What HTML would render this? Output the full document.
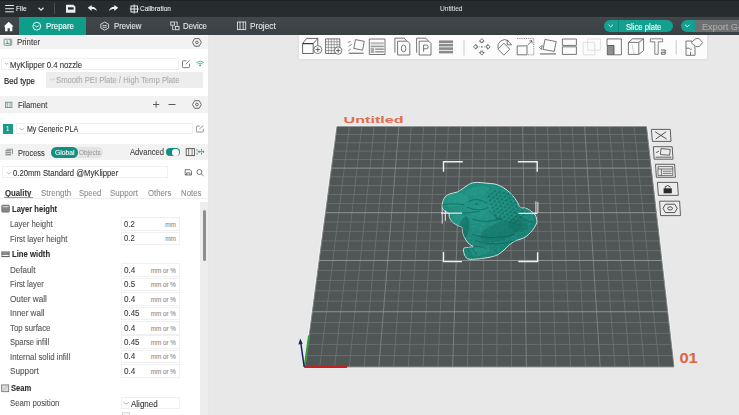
<!DOCTYPE html>
<html><head><meta charset="utf-8">
<style>
*{margin:0;padding:0;box-sizing:border-box}
html,body{width:739px;height:415px;overflow:hidden;background:#e8e8e8;font-family:"Liberation Sans",sans-serif;}
.a{position:absolute;white-space:nowrap}
#title{position:absolute;left:0;top:0;width:739px;height:16.5px;background:#272c2e;border-top:1px solid #1e2224}
#tabs{position:absolute;left:0;top:16.5px;width:739px;height:18px;background:linear-gradient(#41474a,#3a4043)}
.tw{color:#fff;font-size:7.6px;line-height:1}
.tt{color:#eef0f0;font-size:8.6px;line-height:1}
#panel{position:absolute;left:0;top:34.5px;width:208px;height:381px;background:#fff}
.hdr{position:absolute;left:0;width:208px;background:#f2f2f2}
.ht{font-size:8.4px;color:#333;line-height:1}
.lt{font-size:8px;color:#555;line-height:1}
.bt{font-size:8px;color:#222;font-weight:bold;line-height:1}
.inp{position:absolute;border:1px solid #f0f0f0;background:#fff}
.val{font-size:8px;color:#333;line-height:1}
.unit{font-size:6.4px;color:#777;line-height:1}
svg{position:absolute;overflow:visible}
</style></head><body>
<div id="title"></div>
<div id="tabs"></div>

<!-- title bar contents -->
<svg style="left:0;top:0" width="739" height="17">
  <g stroke="#e8eaea" stroke-width="1.2" fill="none">
    <path d="M5.2 5.5H13.9M5.2 8.7H13.9M5.2 11.8H13.9" stroke-width="1"/>
    <path d="M38.5 7.8L41 10.2L43.5 7.8"/>
  </g>
  <path d="M54.5 3V14" stroke="#4a4f52" stroke-width="1"/>
  <!-- save -->
  <path d="M66 4.8H73.4L75.4 6.8V12.8H66Z" fill="#eceeee"/>
  <rect x="68" y="7.3" width="5.6" height="2.3" fill="#24292b"/>
  <!-- undo -->
  <path d="M87.7 7.8L91.6 4.9V6.8C94.6 6.8 96.7 8.4 96.7 11.2C95.5 9.6 94 9.1 91.6 9.1V10.9Z" fill="#eceeee"/>
  <!-- redo -->
  <path d="M118.2 7.8L114.3 4.9V6.8C111.3 6.8 109.2 8.4 109.2 11.2C110.4 9.6 111.9 9.1 114.3 9.1V10.9Z" fill="#eceeee"/>
  <!-- calibration -->
  <g stroke="#e8eaea" stroke-width="1" fill="none">
    <rect x="131" y="6" width="6.5" height="6" />
    <path d="M134.2 4.5V13.5M129.8 9H138.8"/>
  </g>
</svg>

<!-- tab bar contents -->
<div class="a" style="left:19px;top:16.5px;width:67.4px;height:18px;background:#0f9d8a"></div>
<svg style="left:0;top:0" width="739" height="35">
  <!-- home -->
  <path d="M3.8 26.5L8.7 21.8L13.6 26.5H12.3V31.2H9.8V28.2H7.6V31.2H5.1V26.5Z" fill="#fff"/>
  <!-- prepare icon -->
  <g stroke="#fff" stroke-width="0.9" fill="none">
    <circle cx="36.8" cy="26.2" r="3.9"/>
    <path d="M34.4 25.4L36.8 27L39.2 25.4"/>
  </g>
  <!-- preview icon -->
  <g stroke="#e0e2e2" stroke-width="0.9" fill="none">
    <path d="M104.7 22.1L108.6 24.2V28L104.7 30.1L100.8 28V24.2Z"/>
    <path d="M102.6 25.2Q104.7 26.2 106.8 25.2M102.6 27Q104.7 28 106.8 27"/>
  </g>
  <!-- device -->
  <g stroke="#e0e2e2" stroke-width="0.9" fill="none">
    <rect x="170.8" y="22" width="3.6" height="3.2"/>
    <rect x="175.4" y="26.5" width="3.6" height="3.2"/>
    <path d="M172.6 26V29.7H174.5M177.2 25.7V22H175.5"/>
  </g>
  <!-- project -->
  <g stroke="#e0e2e2" stroke-width="0.9" fill="none">
    <rect x="237.5" y="22" width="8.2" height="7.6"/>
    <path d="M240 22V29.6M243.2 22V29.6"/>
  </g>
</svg>

<!-- slice plate button -->
<div class="a" style="left:604px;top:20px;width:69px;height:12px;border-radius:6px;background:#13a08e"></div>
<div class="a" style="left:617.5px;top:20px;width:0.8px;height:12px;background:#0e8a7a"></div>
<svg style="left:0;top:0" width="739" height="35">
  <path d="M608.5 24.8L610.7 26.8L612.9 24.8" stroke="#fff" stroke-width="0.9" fill="none"/>
</svg>
<div class="a" style="left:680.5px;top:20px;width:20px;height:12px;border-radius:6px;background:#13a08e"></div>
<div class="a" style="left:694.5px;top:20px;width:50px;height:12px;background:#6d6f70"></div>
<svg style="left:0;top:0" width="739" height="35">
  <path d="M685 24.8L687.2 26.8L689.4 24.8" stroke="#fff" stroke-width="0.9" fill="none"/>
</svg>

<div class="a" style="left:15.67px;top:5.40px;font-size:7.56px;line-height:1;color:#f2f2f2;transform:scaleX(0.8695);transform-origin:0 0;-webkit-text-stroke:0.1px #f2f2f2;">File</div>
<div class="a" style="left:140.28px;top:5.40px;font-size:7.56px;line-height:1;color:#e8eaea;transform:scaleX(0.8545);transform-origin:0 0;-webkit-text-stroke:0.1px #e8eaea;">Calibration</div>
<div class="a" style="left:439.57px;top:5.48px;font-size:7.34px;line-height:1;color:#d6d8d8;transform:scaleX(0.9076);transform-origin:0 0;-webkit-text-stroke:0.1px #d6d8d8;">Untitled</div>
<div class="a" style="left:46.21px;top:22.37px;font-size:8.42px;line-height:1;color:#ffffff;transform:scaleX(0.9311);transform-origin:0 0;-webkit-text-stroke:0.1px #ffffff;">Prepare</div>
<div class="a" style="left:113.61px;top:22.37px;font-size:8.42px;line-height:1;color:#e6e8e8;transform:scaleX(0.9177);transform-origin:0 0;-webkit-text-stroke:0.1px #e6e8e8;">Preview</div>
<div class="a" style="left:183.31px;top:22.37px;font-size:8.42px;line-height:1;color:#e6e8e8;transform:scaleX(0.9323);transform-origin:0 0;-webkit-text-stroke:0.1px #e6e8e8;">Device</div>
<div class="a" style="left:250.09px;top:22.37px;font-size:8.42px;line-height:1;color:#e6e8e8;transform:scaleX(0.9819);transform-origin:0 0;-webkit-text-stroke:0.1px #e6e8e8;">Project</div>
<div class="a" style="left:625.92px;top:22.77px;font-size:8.42px;line-height:1;color:#ffffff;transform:scaleX(0.9106);transform-origin:0 0;-webkit-text-stroke:0.1px #ffffff;">Slice plate</div>
<div class="a" style="left:701.54px;top:22.77px;font-size:8.42px;line-height:1;color:#a9abab;transform:scaleX(1.0830);transform-origin:0 0;-webkit-text-stroke:0.1px #a9abab;">Export G-code</div>
<!-- left panel -->
<div id="panel"></div>
<div class="hdr" style="top:35.6px;height:13.7px"></div>
<div class="hdr" style="top:96px;height:17px"></div>
<div class="hdr" style="top:143.6px;height:16px"></div>
<div class="a" style="left:16.86px;top:38.45px;font-size:8.86px;line-height:1;color:#3a3a3a;transform:scaleX(0.8898);transform-origin:0 0;-webkit-text-stroke:0.1px #3a3a3a;">Printer</div>
<div class="a" style="left:17.52px;top:101.15px;font-size:8.86px;line-height:1;color:#3a3a3a;transform:scaleX(0.8625);transform-origin:0 0;-webkit-text-stroke:0.1px #3a3a3a;">Filament</div>
<div class="a" style="left:18.43px;top:148.60px;font-size:8.86px;line-height:1;color:#3a3a3a;transform:scaleX(0.8335);transform-origin:0 0;-webkit-text-stroke:0.1px #3a3a3a;">Process</div>
<div class="inp" style="left:0.5px;top:58.3px;width:178px;height:11.4px"></div>
<div class="a" style="left:10.41px;top:60.68px;font-size:8.53px;line-height:1;color:#333;transform:scaleX(0.9129);transform-origin:0 0;-webkit-text-stroke:0.1px #333;">MyKlipper 0.4 nozzle</div>
<div class="a" style="left:4.31px;top:76.78px;font-size:8.64px;line-height:1;color:#1e1e1e;transform:scaleX(0.9092);transform-origin:0 0;-webkit-text-stroke:0.1px #1e1e1e;-webkit-text-stroke:0.15px #1e1e1e;">Bed type</div>
<div class="a" style="left:46.1px;top:72px;width:157px;height:15.5px;background:#ededed"></div>
<div class="a" style="left:56.01px;top:76.38px;font-size:8.53px;line-height:1;color:#ababab;transform:scaleX(0.9036);transform-origin:0 0;-webkit-text-stroke:0.1px #ababab;">Smooth PEI Plate / High Temp Plate</div>
<div class="a" style="left:3px;top:123.9px;width:10.2px;height:10px;background:#1a9a8b"></div>
<div class="a" style="left:6.30px;top:126.36px;font-size:7.13px;line-height:1;color:#e8f6f4;transform:scaleX(0.8427);transform-origin:0 0;-webkit-text-stroke:0.1px #e8f6f4;">1</div>
<div class="inp" style="left:15.9px;top:122.6px;width:176.8px;height:11.8px"></div>
<div class="a" style="left:26.65px;top:125.18px;font-size:8.53px;line-height:1;color:#333;transform:scaleX(0.8248);transform-origin:0 0;-webkit-text-stroke:0.1px #333;">My Generic PLA</div>
<div class="a" style="left:51.4px;top:147.4px;width:51.8px;height:10.7px;border-radius:5.3px;background:#e4e4e4"></div>
<div class="a" style="left:51.4px;top:147.4px;width:26.8px;height:10.7px;border-radius:5.3px;background:#0f9181"></div>
<div class="a" style="left:55.16px;top:149.38px;font-size:7.34px;line-height:1;color:#ffffff;transform:scaleX(0.9238);transform-origin:0 0;-webkit-text-stroke:0.1px #ffffff;">Global</div>
<div class="a" style="left:78.88px;top:149.38px;font-size:7.34px;line-height:1;color:#9c9c9c;transform:scaleX(0.8706);transform-origin:0 0;-webkit-text-stroke:0.1px #9c9c9c;">Objects</div>
<div class="a" style="left:130.02px;top:148.48px;font-size:8.64px;line-height:1;color:#444;transform:scaleX(0.8871);transform-origin:0 0;-webkit-text-stroke:0.1px #444;">Advanced</div>
<div class="a" style="left:165.7px;top:148.3px;width:14px;height:8.2px;border-radius:4.1px;background:#0f9181"></div>
<div class="a" style="left:172.3px;top:149.1px;width:6.6px;height:6.6px;border-radius:50%;background:#fff"></div>
<div class="inp" style="left:1.8px;top:166.2px;width:166.3px;height:12.2px"></div>
<div class="a" style="left:12.92px;top:169.08px;font-size:8.53px;line-height:1;color:#333;transform:scaleX(0.9025);transform-origin:0 0;-webkit-text-stroke:0.1px #333;">0.20mm Standard @MyKlipper</div>
<div class="a" style="left:5.41px;top:188.58px;font-size:8.64px;line-height:1;color:#333;transform:scaleX(0.9015);transform-origin:0 0;font-weight:bold;-webkit-text-stroke:0.1px #333;">Quality</div>
<div class="a" style="left:40.50px;top:188.58px;font-size:8.64px;line-height:1;color:#8e8e8e;transform:scaleX(0.9252);transform-origin:0 0;-webkit-text-stroke:0.1px #8e8e8e;">Strength</div>
<div class="a" style="left:79.12px;top:188.58px;font-size:8.64px;line-height:1;color:#8e8e8e;transform:scaleX(0.8882);transform-origin:0 0;-webkit-text-stroke:0.1px #8e8e8e;">Speed</div>
<div class="a" style="left:110.40px;top:188.58px;font-size:8.64px;line-height:1;color:#8e8e8e;transform:scaleX(0.9226);transform-origin:0 0;-webkit-text-stroke:0.1px #8e8e8e;">Support</div>
<div class="a" style="left:148.41px;top:188.58px;font-size:8.64px;line-height:1;color:#8e8e8e;transform:scaleX(0.8986);transform-origin:0 0;-webkit-text-stroke:0.1px #8e8e8e;">Others</div>
<div class="a" style="left:180.91px;top:188.58px;font-size:8.64px;line-height:1;color:#8e8e8e;transform:scaleX(0.9040);transform-origin:0 0;-webkit-text-stroke:0.1px #8e8e8e;">Notes</div>
<div class="a" style="left:0;top:198.3px;width:208px;height:1px;background:#efefef"></div>
<div class="a" style="left:4.3px;top:197.3px;width:28.4px;height:1.2px;background:#d97b72"></div>
<div class="a" style="left:211.5px;top:34.5px;width:1.5px;height:381px;background:#ebebeb"></div>
<div class="a" style="left:200px;top:201.8px;width:7.6px;height:214px;background:#ededed"></div>
<div class="a" style="left:202.5px;top:210px;width:3.9px;height:50.7px;border-radius:2px;background:#8e8e8e"></div>
<div class="a" style="left:11.52px;top:204.58px;font-size:8.53px;line-height:1;color:#2e2e2e;transform:scaleX(0.8907);transform-origin:0 0;font-weight:bold;-webkit-text-stroke:0.1px #2e2e2e;">Layer height</div>
<div class="a" style="left:10.41px;top:220.18px;font-size:8.53px;line-height:1;color:#555555;transform:scaleX(0.9093);transform-origin:0 0;-webkit-text-stroke:0.1px #555555;">Layer height</div>
<div class="inp" style="left:120.9px;top:217.3px;width:59.1px;height:13.6px"></div>
<div class="a" style="left:123.82px;top:219.88px;font-size:8.53px;line-height:1;color:#3c3c3c;transform:scaleX(0.9015);transform-origin:0 0;-webkit-text-stroke:0.1px #3c3c3c;">0.2</div>
<div class="a" style="left:165.18px;top:221.71px;font-size:6.48px;line-height:1;color:#8f8f8f;-webkit-text-stroke:0.1px #8f8f8f;">mm</div>
<div class="a" style="left:10.21px;top:234.58px;font-size:8.53px;line-height:1;color:#555555;transform:scaleX(0.9118);transform-origin:0 0;-webkit-text-stroke:0.1px #555555;">First layer height</div>
<div class="inp" style="left:120.9px;top:231.7px;width:59.1px;height:13.6px"></div>
<div class="a" style="left:123.82px;top:234.28px;font-size:8.53px;line-height:1;color:#3c3c3c;transform:scaleX(0.9015);transform-origin:0 0;-webkit-text-stroke:0.1px #3c3c3c;">0.2</div>
<div class="a" style="left:165.18px;top:236.11px;font-size:6.48px;line-height:1;color:#8f8f8f;-webkit-text-stroke:0.1px #8f8f8f;">mm</div>
<div class="a" style="left:12.41px;top:250.48px;font-size:8.53px;line-height:1;color:#2e2e2e;transform:scaleX(0.9055);transform-origin:0 0;font-weight:bold;-webkit-text-stroke:0.1px #2e2e2e;">Line width</div>
<div class="a" style="left:10.40px;top:265.98px;font-size:8.53px;line-height:1;color:#555555;transform:scaleX(0.9404);transform-origin:0 0;-webkit-text-stroke:0.1px #555555;">Default</div>
<div class="inp" style="left:120.9px;top:263.1px;width:59.1px;height:13.6px"></div>
<div class="a" style="left:123.79px;top:265.68px;font-size:8.53px;line-height:1;color:#3c3c3c;transform:scaleX(0.9556);transform-origin:0 0;-webkit-text-stroke:0.1px #3c3c3c;">0.4</div>
<div class="a" style="left:150.71px;top:267.65px;font-size:6.32px;line-height:1;color:#8f8f8f;-webkit-text-stroke:0.1px #8f8f8f;">mm or %</div>
<div class="a" style="left:10.41px;top:280.48px;font-size:8.53px;line-height:1;color:#555555;transform:scaleX(0.9051);transform-origin:0 0;-webkit-text-stroke:0.1px #555555;">First layer</div>
<div class="inp" style="left:120.9px;top:277.6px;width:59.1px;height:13.6px"></div>
<div class="a" style="left:123.80px;top:280.18px;font-size:8.53px;line-height:1;color:#3c3c3c;transform:scaleX(0.9375);transform-origin:0 0;-webkit-text-stroke:0.1px #3c3c3c;">0.5</div>
<div class="a" style="left:150.71px;top:282.15px;font-size:6.32px;line-height:1;color:#8f8f8f;-webkit-text-stroke:0.1px #8f8f8f;">mm or %</div>
<div class="a" style="left:10.09px;top:294.88px;font-size:8.53px;line-height:1;color:#555555;transform:scaleX(0.9618);transform-origin:0 0;-webkit-text-stroke:0.1px #555555;">Outer wall</div>
<div class="inp" style="left:120.9px;top:292.0px;width:59.1px;height:13.6px"></div>
<div class="a" style="left:123.79px;top:294.58px;font-size:8.53px;line-height:1;color:#3c3c3c;transform:scaleX(0.9556);transform-origin:0 0;-webkit-text-stroke:0.1px #3c3c3c;">0.4</div>
<div class="a" style="left:150.71px;top:296.55px;font-size:6.32px;line-height:1;color:#8f8f8f;-webkit-text-stroke:0.1px #8f8f8f;">mm or %</div>
<div class="a" style="left:10.10px;top:309.38px;font-size:8.53px;line-height:1;color:#555555;transform:scaleX(0.9455);transform-origin:0 0;-webkit-text-stroke:0.1px #555555;">Inner wall</div>
<div class="inp" style="left:120.9px;top:306.5px;width:59.1px;height:13.6px"></div>
<div class="a" style="left:123.80px;top:309.08px;font-size:8.53px;line-height:1;color:#3c3c3c;transform:scaleX(0.9345);transform-origin:0 0;-webkit-text-stroke:0.1px #3c3c3c;">0.45</div>
<div class="a" style="left:150.71px;top:311.05px;font-size:6.32px;line-height:1;color:#8f8f8f;-webkit-text-stroke:0.1px #8f8f8f;">mm or %</div>
<div class="a" style="left:10.11px;top:323.88px;font-size:8.53px;line-height:1;color:#555555;transform:scaleX(0.9191);transform-origin:0 0;-webkit-text-stroke:0.1px #555555;">Top surface</div>
<div class="inp" style="left:120.9px;top:321.0px;width:59.1px;height:13.6px"></div>
<div class="a" style="left:123.79px;top:323.58px;font-size:8.53px;line-height:1;color:#3c3c3c;transform:scaleX(0.9556);transform-origin:0 0;-webkit-text-stroke:0.1px #3c3c3c;">0.4</div>
<div class="a" style="left:150.71px;top:325.55px;font-size:6.32px;line-height:1;color:#8f8f8f;-webkit-text-stroke:0.1px #8f8f8f;">mm or %</div>
<div class="a" style="left:10.12px;top:338.28px;font-size:8.53px;line-height:1;color:#555555;transform:scaleX(0.8908);transform-origin:0 0;-webkit-text-stroke:0.1px #555555;">Sparse infill</div>
<div class="inp" style="left:120.9px;top:335.4px;width:59.1px;height:13.6px"></div>
<div class="a" style="left:123.80px;top:337.98px;font-size:8.53px;line-height:1;color:#3c3c3c;transform:scaleX(0.9345);transform-origin:0 0;-webkit-text-stroke:0.1px #3c3c3c;">0.45</div>
<div class="a" style="left:150.71px;top:339.95px;font-size:6.32px;line-height:1;color:#8f8f8f;-webkit-text-stroke:0.1px #8f8f8f;">mm or %</div>
<div class="a" style="left:10.11px;top:352.78px;font-size:8.53px;line-height:1;color:#555555;transform:scaleX(0.9231);transform-origin:0 0;-webkit-text-stroke:0.1px #555555;">Internal solid infill</div>
<div class="inp" style="left:120.9px;top:349.9px;width:59.1px;height:13.6px"></div>
<div class="a" style="left:123.79px;top:352.48px;font-size:8.53px;line-height:1;color:#3c3c3c;transform:scaleX(0.9556);transform-origin:0 0;-webkit-text-stroke:0.1px #3c3c3c;">0.4</div>
<div class="a" style="left:150.71px;top:354.45px;font-size:6.32px;line-height:1;color:#8f8f8f;-webkit-text-stroke:0.1px #8f8f8f;">mm or %</div>
<div class="a" style="left:10.09px;top:367.28px;font-size:8.53px;line-height:1;color:#555555;transform:scaleX(0.9651);transform-origin:0 0;-webkit-text-stroke:0.1px #555555;">Support</div>
<div class="inp" style="left:120.9px;top:364.4px;width:59.1px;height:13.6px"></div>
<div class="a" style="left:123.79px;top:366.98px;font-size:8.53px;line-height:1;color:#3c3c3c;transform:scaleX(0.9556);transform-origin:0 0;-webkit-text-stroke:0.1px #3c3c3c;">0.4</div>
<div class="a" style="left:150.71px;top:368.95px;font-size:6.32px;line-height:1;color:#8f8f8f;-webkit-text-stroke:0.1px #8f8f8f;">mm or %</div>
<div class="a" style="left:11.02px;top:383.88px;font-size:8.53px;line-height:1;color:#2e2e2e;transform:scaleX(0.8909);transform-origin:0 0;font-weight:bold;-webkit-text-stroke:0.1px #2e2e2e;">Seam</div>
<div class="a" style="left:10.11px;top:399.28px;font-size:8.53px;line-height:1;color:#555555;transform:scaleX(0.9156);transform-origin:0 0;-webkit-text-stroke:0.1px #555555;">Seam position</div>
<div class="inp" style="left:120.9px;top:397.4px;width:59.1px;height:11.8px"></div>
<div class="a" style="left:130.60px;top:399.98px;font-size:8.53px;line-height:1;color:#333;transform:scaleX(0.9388);transform-origin:0 0;-webkit-text-stroke:0.1px #333;">Aligned</div>
<div class="a" style="left:121.6px;top:412px;width:8px;height:4px;border:1px solid #ddd;background:#f4f4f4"></div>
<svg style="left:0;top:0" width="739" height="415">
<!-- printer icon -->
<rect x="4.1" y="39.2" width="7.6" height="6.1" rx="0.6" fill="#e4f4f1" stroke="#74827f" stroke-width="0.8"/>
<path d="M10.3 39.4V45.2M5.6 43.5H9.3M7.2 40.4V43.5" stroke="#66746f" stroke-width="0.75" fill="none"/>
<!-- gear icons -->
<g stroke="#5a5a5a" stroke-width="0.9" fill="none">
<path d="M194.6 38.6H199.2L201.3 42.4L199.2 46.2H194.6L192.5 42.4Z"/><circle cx="196.9" cy="42.4" r="1.3"/>
<path d="M194.6 100.7H199.2L201.3 104.5L199.2 108.3H194.6L192.5 104.5Z"/><circle cx="196.9" cy="104.5" r="1.3"/>
<path d="M153 104.5H159.2M156.1 101.4V107.6M168.5 104.5H175.5" stroke-width="1"/>
</g>
<!-- chevrons -->
<g stroke="#9a9a9a" stroke-width="0.7" fill="none">
<path d="M4.8 63L6.5 64.4L8.2 63"/>
<path d="M19.6 128.2L21.9 129.8L24.2 128.2"/>
<path d="M7.2 172.4L9 173.8L10.8 172.4"/>
<path d="M123.5 402.5L126.2 404L128.9 402.5"/>
</g>
<path d="M50 78.8L52.5 80.2L55 78.8" stroke="#c0c0c0" stroke-width="0.7" fill="none"/>
<!-- edit icons -->
<g stroke="#707070" stroke-width="0.9" fill="none">
<path d="M186.5 60.8H183.2Q182.5 60.8 182.5 61.5V66.9Q182.5 67.6 183.2 67.6H188.8Q189.5 67.6 189.5 66.9V63.8M185.7 64.4L189.6 60.5"/>
<path d="M199.6 126.1H197Q196.4 126.1 196.4 126.7V131.4Q196.4 132 197 132H202.7Q203.3 132 203.3 131.4V128.8M199.3 129.1L203.3 125.6" stroke="#8a8a8a"/>
</g>
<!-- wifi -->
<g stroke="#2fa896" stroke-width="0.8" fill="none">
<path d="M196.3 62.6Q200.1 59.6 203.9 62.6M197.6 64Q200.1 62 202.6 64"/>
<circle cx="200.1" cy="65.3" r="0.6" fill="#2fa896"/>
</g>
<!-- filament icon -->
<rect x="5.4" y="102.2" width="6.5" height="5.4" fill="#dff1ee" stroke="#6f8d88" stroke-width="0.8"/>
<path d="M7.3 102.2V107.6M10 102.2V107.6" stroke="#6f8d88" stroke-width="0.7"/>
<!-- process icon -->
<g stroke="#6a7472" stroke-width="1" fill="none">
<path d="M5.3 150.8H11.2M5.3 152.8H11.2M5.3 154.8H11.2"/>
<path d="M6.5 149.2H12.5V154" stroke-width="0.7"/>
</g>
<!-- book + scan -->
<rect x="186.2" y="148.6" width="8.3" height="7" fill="none" stroke="#555" stroke-width="0.9"/>
<path d="M188.6 148.6V155.6M192.1 148.6V155.6" stroke="#555" stroke-width="0.7"/>
<g stroke="#2aa493" stroke-width="1" fill="none">
<path d="M197 149V150.6M197 152.8V154.6M199.3 150.6V152.8M201.5 149V150.6M201.5 152.8V154.6M203.6 150.6V152.8M197.5 151.7H203"/>
</g>
<!-- save + search -->
<g stroke="#606060" stroke-width="0.85" fill="none">
<path d="M185.2 169.7H190L191.5 171.2V175H185.2Z"/><path d="M186.6 175V172.9H190V175"/>
<circle cx="199.4" cy="172" r="2.5"/><path d="M201.3 173.9L203.6 176"/>
</g>
<!-- section icons -->
<rect x="1.8" y="205.2" width="7.5" height="6.9" rx="0.8" fill="#8d8d8d" stroke="#5f5f5f" stroke-width="0.8"/>
<path d="M2.6 206.7H8.5" stroke="#e6e6e6" stroke-width="0.8"/>
<path d="M2.5 209.3H8.6" stroke="#707070" stroke-width="0.5"/>
<rect x="1.5" y="251.4" width="8" height="3.7" fill="#8a8a8a"/>
<path d="M1.5 256.6H9.5" stroke="#555" stroke-width="1"/>
<path d="M1.9 251.4V257M9.1 251.4V257" stroke="#666" stroke-width="0.7"/>
<rect x="1.7" y="384.9" width="7" height="6.8" fill="#dcdcdc" stroke="#6e6e6e" stroke-width="0.8"/>
<path d="M2.5 391L8 385.6" stroke="#b0b0b0" stroke-width="0.7"/>
</svg>

<!-- viewport -->
<svg style="left:0;top:0" width="739" height="415">
<polygon points="337,126.4 646.5,126.4 674,367 305,367" fill="none" stroke="#f6f6f6" stroke-width="2.6" stroke-linejoin="round"/><polygon points="337,126.4 646.5,126.4 674,367 305,367" fill="#505555"/>
<g stroke="#6e7474" stroke-width="0.8"><line x1="349.38" y1="126.40" x2="319.76" y2="367.00"/><line x1="361.76" y1="126.40" x2="334.52" y2="367.00"/><line x1="374.14" y1="126.40" x2="349.28" y2="367.00"/><line x1="386.52" y1="126.40" x2="364.04" y2="367.00"/><line x1="411.28" y1="126.40" x2="393.56" y2="367.00"/><line x1="423.66" y1="126.40" x2="408.32" y2="367.00"/><line x1="436.04" y1="126.40" x2="423.08" y2="367.00"/><line x1="448.42" y1="126.40" x2="437.84" y2="367.00"/><line x1="473.18" y1="126.40" x2="467.36" y2="367.00"/><line x1="485.56" y1="126.40" x2="482.12" y2="367.00"/><line x1="497.94" y1="126.40" x2="496.88" y2="367.00"/><line x1="510.32" y1="126.40" x2="511.64" y2="367.00"/><line x1="535.08" y1="126.40" x2="541.16" y2="367.00"/><line x1="547.46" y1="126.40" x2="555.92" y2="367.00"/><line x1="559.84" y1="126.40" x2="570.68" y2="367.00"/><line x1="572.22" y1="126.40" x2="585.44" y2="367.00"/><line x1="596.98" y1="126.40" x2="614.96" y2="367.00"/><line x1="609.36" y1="126.40" x2="629.72" y2="367.00"/><line x1="621.74" y1="126.40" x2="644.48" y2="367.00"/><line x1="634.12" y1="126.40" x2="659.24" y2="367.00"/><line x1="335.92" y1="134.52" x2="647.43" y2="134.52"/><line x1="334.82" y1="142.76" x2="648.37" y2="142.76"/><line x1="333.72" y1="151.09" x2="649.32" y2="151.09"/><line x1="332.59" y1="159.54" x2="650.29" y2="159.54"/><line x1="330.30" y1="176.78" x2="652.26" y2="176.78"/><line x1="329.13" y1="185.58" x2="653.26" y2="185.58"/><line x1="327.94" y1="194.49" x2="654.28" y2="194.49"/><line x1="326.74" y1="203.53" x2="655.32" y2="203.53"/><line x1="324.29" y1="221.97" x2="657.42" y2="221.97"/><line x1="323.04" y1="231.39" x2="658.50" y2="231.39"/><line x1="321.77" y1="240.94" x2="659.59" y2="240.94"/><line x1="320.48" y1="250.63" x2="660.70" y2="250.63"/><line x1="317.85" y1="270.42" x2="662.96" y2="270.42"/><line x1="316.50" y1="280.53" x2="664.12" y2="280.53"/><line x1="315.14" y1="290.78" x2="665.29" y2="290.78"/><line x1="313.75" y1="301.19" x2="666.48" y2="301.19"/><line x1="310.92" y1="322.47" x2="668.91" y2="322.47"/><line x1="309.47" y1="333.35" x2="670.15" y2="333.35"/><line x1="308.01" y1="344.40" x2="671.42" y2="344.40"/><line x1="306.51" y1="355.61" x2="672.70" y2="355.61"/></g>
<g stroke="#7f8484" stroke-width="0.9"><line x1="337.00" y1="126.40" x2="305.00" y2="367.00"/><line x1="398.90" y1="126.40" x2="378.80" y2="367.00"/><line x1="460.80" y1="126.40" x2="452.60" y2="367.00"/><line x1="522.70" y1="126.40" x2="526.40" y2="367.00"/><line x1="584.60" y1="126.40" x2="600.20" y2="367.00"/><line x1="646.50" y1="126.40" x2="674.00" y2="367.00"/></g>
<g stroke="#8e9393" stroke-width="1"><line x1="337.00" y1="126.40" x2="646.50" y2="126.40"/><line x1="331.45" y1="168.11" x2="651.27" y2="168.11"/><line x1="325.52" y1="212.69" x2="656.36" y2="212.69"/><line x1="319.17" y1="260.45" x2="661.82" y2="260.45"/><line x1="312.35" y1="311.75" x2="667.69" y2="311.75"/><line x1="305.00" y1="367.00" x2="674.00" y2="367.00"/></g>
</svg>
<svg style="left:0;top:0" width="739" height="415">
<defs>
<clipPath id="mc"><path d="M442.8 201.7C443.3 199.9 444.0 198.2 445.2 196.9C446.4 195.6 448.0 194.7 450.0 193.9C452.0 193.1 455.3 192.8 457.3 192.0C459.3 191.2 459.9 190.4 462.1 189.0C464.3 187.6 467.9 184.7 470.5 183.6C473.1 182.5 475.2 182.5 477.8 182.4C480.4 182.3 483.2 182.9 486.0 183.2C488.8 183.5 491.8 183.3 494.7 184.0C497.6 184.7 500.6 186.0 503.3 187.6C506.0 189.2 508.4 191.1 510.6 193.3C512.8 195.5 514.8 198.3 516.4 200.6C518.0 202.9 518.6 205.8 520.0 207.1C521.4 208.3 523.4 207.6 525.0 208.1C526.6 208.6 527.7 208.8 529.4 210.0C531.1 211.2 534.0 213.2 535.2 215.0C536.4 216.8 536.6 219.3 536.8 220.8C537.0 222.3 537.0 222.3 536.2 224.0C535.4 225.7 534.0 228.5 532.1 230.7C530.2 232.9 527.7 235.6 524.9 237.3C522.1 239.0 517.9 239.6 515.3 240.9C512.7 242.2 511.0 243.7 509.3 245.1C507.6 246.5 506.8 247.5 505.0 249.1C503.2 250.7 500.6 253.1 498.4 254.4C496.2 255.7 494.0 256.2 491.6 256.8C489.2 257.4 486.8 257.8 483.9 258.2C481.0 258.6 477.0 259.1 474.3 259.2C471.6 259.3 469.2 259.6 467.5 258.7C465.8 257.8 464.8 255.6 464.2 253.9C463.6 252.2 463.3 249.7 463.7 248.6C464.1 247.5 465.0 247.9 466.6 247.6C468.2 247.3 472.8 247.2 473.3 246.7C473.8 246.1 470.8 245.5 469.5 244.3C468.2 243.1 466.7 241.4 465.6 239.5C464.5 237.6 463.3 234.7 462.7 232.7C462.1 230.7 462.8 228.7 462.1 227.5C461.4 226.3 460.1 226.7 458.5 225.8C456.9 224.9 454.0 223.6 452.5 222.2C451.0 220.8 450.0 218.8 449.4 217.3C448.8 215.8 449.6 214.2 448.8 213.1C448.0 212.0 445.7 211.6 444.6 210.7C443.5 209.8 442.5 209.2 442.2 207.7C441.9 206.2 442.3 203.5 442.8 201.7Z"/></clipPath>
<radialGradient id="mg" cx="0.38" cy="0.35" r="0.75">
<stop offset="0" stop-color="#21988a"/><stop offset="1" stop-color="#15786b"/></radialGradient>
<filter id="tx" x="430" y="175" width="115" height="90" filterUnits="userSpaceOnUse">
<feTurbulence type="fractalNoise" baseFrequency="0.35 0.5" numOctaves="2" seed="7" result="n"/>
<feColorMatrix in="n" type="matrix" values="0 0 0 0 0.05  0 0 0 0 0.33  0 0 0 0 0.29  0 0 0 -2.2 1.25"/>
</filter>
</defs>
<!-- Untitled label -->
<text x="343.6" y="123" font-family="Liberation Sans" font-weight="bold" font-size="9.6" fill="#e26d4e" textLength="60" lengthAdjust="spacingAndGlyphs">Untitled</text>
<text x="679.4" y="363" font-family="Liberation Sans" font-weight="bold" font-size="14.6" fill="#de6443" textLength="18.4" lengthAdjust="spacingAndGlyphs">01</text>
<!-- axes -->
<path d="M304.6 366.8L309 335.5" stroke="#2e9e3e" stroke-width="1.9"/>
<path d="M304.2 367L347 367" stroke="#c42222" stroke-width="1.8"/>
<path d="M304.2 366.8L300.6 341.5" stroke="#1f2068" stroke-width="1.5"/>
<path d="M300.2 338.4L302.7 343.8L298.4 344.4Z" fill="#1f2068"/>
<!-- brackets -->
<g stroke="#f0f0f0" stroke-width="1.4" fill="none">
<path d="M462.8 161.8H443.5V171.7"/>
<path d="M517.8 161.8H537.2V171.7"/>
<path d="M462 261.6H443.5V252"/>
<path d="M518.3 261.5H537.6V252.3"/>
</g>
<!-- model -->
<path d="M442.8 201.7C443.3 199.9 444.0 198.2 445.2 196.9C446.4 195.6 448.0 194.7 450.0 193.9C452.0 193.1 455.3 192.8 457.3 192.0C459.3 191.2 459.9 190.4 462.1 189.0C464.3 187.6 467.9 184.7 470.5 183.6C473.1 182.5 475.2 182.5 477.8 182.4C480.4 182.3 483.2 182.9 486.0 183.2C488.8 183.5 491.8 183.3 494.7 184.0C497.6 184.7 500.6 186.0 503.3 187.6C506.0 189.2 508.4 191.1 510.6 193.3C512.8 195.5 514.8 198.3 516.4 200.6C518.0 202.9 518.6 205.8 520.0 207.1C521.4 208.3 523.4 207.6 525.0 208.1C526.6 208.6 527.7 208.8 529.4 210.0C531.1 211.2 534.0 213.2 535.2 215.0C536.4 216.8 536.6 219.3 536.8 220.8C537.0 222.3 537.0 222.3 536.2 224.0C535.4 225.7 534.0 228.5 532.1 230.7C530.2 232.9 527.7 235.6 524.9 237.3C522.1 239.0 517.9 239.6 515.3 240.9C512.7 242.2 511.0 243.7 509.3 245.1C507.6 246.5 506.8 247.5 505.0 249.1C503.2 250.7 500.6 253.1 498.4 254.4C496.2 255.7 494.0 256.2 491.6 256.8C489.2 257.4 486.8 257.8 483.9 258.2C481.0 258.6 477.0 259.1 474.3 259.2C471.6 259.3 469.2 259.6 467.5 258.7C465.8 257.8 464.8 255.6 464.2 253.9C463.6 252.2 463.3 249.7 463.7 248.6C464.1 247.5 465.0 247.9 466.6 247.6C468.2 247.3 472.8 247.2 473.3 246.7C473.8 246.1 470.8 245.5 469.5 244.3C468.2 243.1 466.7 241.4 465.6 239.5C464.5 237.6 463.3 234.7 462.7 232.7C462.1 230.7 462.8 228.7 462.1 227.5C461.4 226.3 460.1 226.7 458.5 225.8C456.9 224.9 454.0 223.6 452.5 222.2C451.0 220.8 450.0 218.8 449.4 217.3C448.8 215.8 449.6 214.2 448.8 213.1C448.0 212.0 445.7 211.6 444.6 210.7C443.5 209.8 442.5 209.2 442.2 207.7C441.9 206.2 442.3 203.5 442.8 201.7Z" fill="url(#mg)" stroke="#cdebe5" stroke-width="1"/>
<g clip-path="url(#mc)"><rect x="430" y="175" width="115" height="90" filter="url(#tx)" opacity="0.6"/></g>
<g clip-path="url(#mc)" fill="none" stroke-linecap="round">
<ellipse cx="455.6" cy="200.0" rx="13" ry="6.5" fill="#2aa593" opacity="0.45" transform="rotate(-12 455.6 200.0)"/><ellipse cx="458.0" cy="220.2" rx="8" ry="6" fill="#27a08f" opacity="0.4" transform="rotate(0 458.0 220.2)"/><ellipse cx="479.2" cy="251.2" rx="11" ry="4.5" fill="#27a08f" opacity="0.45" transform="rotate(-8 479.2 251.2)"/><ellipse cx="477.5" cy="190.6" rx="12" ry="4" fill="#2aa593" opacity="0.35" transform="rotate(-10 477.5 190.6)"/><ellipse cx="528.1" cy="217.5" rx="6" ry="8" fill="#23998a" opacity="0.35" transform="rotate(0 528.1 217.5)"/><ellipse cx="501.1" cy="231.0" rx="22" ry="9" fill="#0f665b" opacity="0.35" transform="rotate(-20 501.1 231.0)"/><ellipse cx="464.0" cy="228.3" rx="5" ry="12" fill="#0d5f55" opacity="0.45" transform="rotate(10 464.0 228.3)"/><ellipse cx="518.0" cy="224.3" rx="10" ry="8" fill="#0f665b" opacity="0.3" transform="rotate(0 518.0 224.3)"/><g fill="#0e6459" opacity="0.55"><circle cx="494.7" cy="190.9" r="1.25"/><circle cx="499.1" cy="191.9" r="1.25"/><circle cx="503.5" cy="192.9" r="1.25"/><circle cx="507.9" cy="193.9" r="1.25"/><circle cx="512.2" cy="194.9" r="1.25"/><circle cx="516.6" cy="195.9" r="1.25"/><circle cx="521.0" cy="197.0" r="1.25"/><circle cx="491.7" cy="193.6" r="1.25"/><circle cx="496.1" cy="194.6" r="1.25"/><circle cx="500.4" cy="195.6" r="1.25"/><circle cx="504.8" cy="196.6" r="1.25"/><circle cx="509.2" cy="197.6" r="1.25"/><circle cx="513.6" cy="198.6" r="1.25"/><circle cx="518.0" cy="199.7" r="1.25"/><circle cx="522.3" cy="200.7" r="1.25"/><circle cx="488.6" cy="196.3" r="1.25"/><circle cx="493.0" cy="197.3" r="1.25"/><circle cx="497.4" cy="198.3" r="1.25"/><circle cx="501.8" cy="199.3" r="1.25"/><circle cx="506.2" cy="200.3" r="1.25"/><circle cx="510.5" cy="201.3" r="1.25"/><circle cx="514.9" cy="202.4" r="1.25"/><circle cx="519.3" cy="203.4" r="1.25"/><circle cx="523.7" cy="204.4" r="1.25"/><circle cx="490.0" cy="200.0" r="1.25"/><circle cx="494.4" cy="201.0" r="1.25"/><circle cx="498.8" cy="202.0" r="1.25"/><circle cx="503.1" cy="203.0" r="1.25"/><circle cx="507.5" cy="204.0" r="1.25"/><circle cx="511.9" cy="205.0" r="1.25"/><circle cx="516.3" cy="206.1" r="1.25"/><circle cx="520.7" cy="207.1" r="1.25"/><circle cx="525.0" cy="208.1" r="1.25"/><circle cx="491.3" cy="203.7" r="1.25"/><circle cx="495.7" cy="204.7" r="1.25"/><circle cx="500.1" cy="205.7" r="1.25"/><circle cx="504.5" cy="206.7" r="1.25"/><circle cx="508.9" cy="207.7" r="1.25"/><circle cx="513.2" cy="208.8" r="1.25"/><circle cx="517.6" cy="209.8" r="1.25"/><circle cx="522.0" cy="210.8" r="1.25"/><circle cx="526.4" cy="211.8" r="1.25"/><circle cx="492.7" cy="207.4" r="1.25"/><circle cx="497.1" cy="208.4" r="1.25"/><circle cx="501.4" cy="209.4" r="1.25"/><circle cx="505.8" cy="210.4" r="1.25"/><circle cx="510.2" cy="211.5" r="1.25"/><circle cx="514.6" cy="212.5" r="1.25"/><circle cx="519.0" cy="213.5" r="1.25"/><circle cx="523.4" cy="214.5" r="1.25"/><circle cx="494.0" cy="211.1" r="1.25"/><circle cx="498.4" cy="212.1" r="1.25"/><circle cx="502.8" cy="213.1" r="1.25"/><circle cx="507.2" cy="214.1" r="1.25"/><circle cx="511.6" cy="215.2" r="1.25"/><circle cx="515.9" cy="216.2" r="1.25"/><circle cx="520.3" cy="217.2" r="1.25"/><circle cx="495.4" cy="214.8" r="1.25"/><circle cx="499.8" cy="215.8" r="1.25"/><circle cx="504.1" cy="216.8" r="1.25"/><circle cx="508.5" cy="217.9" r="1.25"/><circle cx="512.9" cy="218.9" r="1.25"/><circle cx="517.3" cy="219.9" r="1.25"/><circle cx="496.7" cy="218.5" r="1.25"/><circle cx="501.1" cy="219.5" r="1.25"/><circle cx="505.5" cy="220.6" r="1.25"/><circle cx="509.9" cy="221.6" r="1.25"/><circle cx="514.3" cy="222.6" r="1.25"/></g><g fill="#34b09d" opacity="0.45"><circle cx="493.9" cy="190.1" r="0.8"/><circle cx="498.3" cy="191.1" r="0.8"/><circle cx="502.7" cy="192.1" r="0.8"/><circle cx="507.1" cy="193.1" r="0.8"/><circle cx="511.4" cy="194.1" r="0.8"/><circle cx="515.8" cy="195.1" r="0.8"/><circle cx="520.2" cy="196.2" r="0.8"/><circle cx="490.9" cy="192.8" r="0.8"/><circle cx="495.3" cy="193.8" r="0.8"/><circle cx="499.6" cy="194.8" r="0.8"/><circle cx="504.0" cy="195.8" r="0.8"/><circle cx="508.4" cy="196.8" r="0.8"/><circle cx="512.8" cy="197.8" r="0.8"/><circle cx="517.2" cy="198.9" r="0.8"/><circle cx="521.5" cy="199.9" r="0.8"/><circle cx="487.8" cy="195.5" r="0.8"/><circle cx="492.2" cy="196.5" r="0.8"/><circle cx="496.6" cy="197.5" r="0.8"/><circle cx="501.0" cy="198.5" r="0.8"/><circle cx="505.4" cy="199.5" r="0.8"/><circle cx="509.7" cy="200.5" r="0.8"/><circle cx="514.1" cy="201.6" r="0.8"/><circle cx="518.5" cy="202.6" r="0.8"/><circle cx="522.9" cy="203.6" r="0.8"/><circle cx="489.2" cy="199.2" r="0.8"/><circle cx="493.6" cy="200.2" r="0.8"/><circle cx="498.0" cy="201.2" r="0.8"/><circle cx="502.3" cy="202.2" r="0.8"/><circle cx="506.7" cy="203.2" r="0.8"/><circle cx="511.1" cy="204.2" r="0.8"/><circle cx="515.5" cy="205.3" r="0.8"/><circle cx="519.9" cy="206.3" r="0.8"/><circle cx="524.2" cy="207.3" r="0.8"/><circle cx="490.5" cy="202.9" r="0.8"/><circle cx="494.9" cy="203.9" r="0.8"/><circle cx="499.3" cy="204.9" r="0.8"/><circle cx="503.7" cy="205.9" r="0.8"/><circle cx="508.1" cy="206.9" r="0.8"/><circle cx="512.4" cy="208.0" r="0.8"/><circle cx="516.8" cy="209.0" r="0.8"/><circle cx="521.2" cy="210.0" r="0.8"/><circle cx="525.6" cy="211.0" r="0.8"/><circle cx="491.9" cy="206.6" r="0.8"/><circle cx="496.3" cy="207.6" r="0.8"/><circle cx="500.6" cy="208.6" r="0.8"/><circle cx="505.0" cy="209.6" r="0.8"/><circle cx="509.4" cy="210.7" r="0.8"/><circle cx="513.8" cy="211.7" r="0.8"/><circle cx="518.2" cy="212.7" r="0.8"/><circle cx="522.6" cy="213.7" r="0.8"/><circle cx="493.2" cy="210.3" r="0.8"/><circle cx="497.6" cy="211.3" r="0.8"/><circle cx="502.0" cy="212.3" r="0.8"/><circle cx="506.4" cy="213.3" r="0.8"/><circle cx="510.8" cy="214.4" r="0.8"/><circle cx="515.1" cy="215.4" r="0.8"/><circle cx="519.5" cy="216.4" r="0.8"/><circle cx="494.6" cy="214.0" r="0.8"/><circle cx="499.0" cy="215.0" r="0.8"/><circle cx="503.3" cy="216.0" r="0.8"/><circle cx="507.7" cy="217.1" r="0.8"/><circle cx="512.1" cy="218.1" r="0.8"/><circle cx="516.5" cy="219.1" r="0.8"/><circle cx="495.9" cy="217.7" r="0.8"/><circle cx="500.3" cy="218.7" r="0.8"/><circle cx="504.7" cy="219.8" r="0.8"/><circle cx="509.1" cy="220.8" r="0.8"/><circle cx="513.5" cy="221.8" r="0.8"/></g><path d="M443.8 211.5Q460.7 214.8 479.2 211.5M469.1 201.3Q477.5 196.6 487.0 203.4M467.4 207.4Q480.9 212.5 488.3 207.4M472.5 219.2Q487.6 224.3 501.1 218.2M472.5 234.4Q491.0 241.1 514.6 234.4M475.8 241.1Q494.4 247.2 518.0 240.4M467.4 247.2Q479.2 245.2 485.9 248.5M440.4 205.7Q450.6 202.4 464.0 204.7M489.3 210.8Q494.4 217.5 501.1 219.5M514.6 212.5Q524.7 220.9 533.1 222.6" stroke="#0c5c52" stroke-width="1" opacity="0.6" fill="none" stroke-linecap="round"/><ellipse cx="476.8" cy="204.0" rx="1.6" ry="1.1" fill="#0b5a50" opacity="0.5"/><path d="M466.7 248.5Q470.1 251.2 472.1 255.3M470.8 247.2Q474.8 249.9 476.8 254.6" stroke="#0d6157" stroke-width="0.8" fill="none" opacity="0.7"/>
</g>
<!-- middle ticks -->
<g stroke="#eeeeee" stroke-width="1.2" fill="none">
<path d="M441 213.2H462M518.5 213.3H537.3"/>
<path d="M442.2 207.8V223.7M445.4 210.7V220.8M535.9 201.3V214.3M537.9 202V213" stroke-width="0.9"/>
</g>
<!-- right icons -->
<g stroke="#505050" stroke-width="0.9" fill="#ececec" stroke-linejoin="round">
<path d="M651.4 129.4H670.3L671 141.4H652.4Z"/>
<path d="M653.3 146.7H672.2L673 159.2H654.2Z"/>
<path d="M655.5 164.3H674.6L675.4 177.3H656.4Z"/>
<path d="M657.4 182.4H677.5L678.3 195.4H658.4Z"/>
<path d="M659.6 201.2H679.6L680.5 215.6H660.6Z"/>
</g>
<g stroke="#404040" stroke-width="0.9" fill="none">
<path d="M655.2 131.8L666.6 139M666.2 131.8L655.8 139"/>
<path d="M661 148.6L670.2 149.4L669.6 155.2L660.4 154.6Z M656 152.6L659 151.2M655.6 157.2H671.4" stroke-width="0.8"/>
<path d="M658 166.6H672.8V175.6H658Z M658 169H672.8 M661.4 169V175.6 M662.8 171.2H671.6M662.8 173.4H671.6" stroke-width="0.7"/>
<path d="M665.2 188.4V186.8Q667.7 184.2 670.2 186.8V187.4" stroke-width="1"/>
<path d="M665.4 204.2H674.8L677.2 208.4L674.8 212.6H665.4L663 208.4Z"/>
<ellipse cx="670.1" cy="208.4" rx="2.4" ry="1.6"/>
</g>
<rect x="663.6" y="188.3" width="8.2" height="5" fill="#2a2a2a"/>
</svg>
<div class="a" style="left:298.5px;top:34.5px;width:408px;height:24px;background:#fcfcfc;box-shadow:0 0 2px 1px rgba(0,0,0,0.05)"></div>
<svg style="left:0;top:0" width="739" height="70">
<g fill="none" stroke="#555" stroke-width="0.8" stroke-linejoin="round">
 <!-- cube + -->
 <path d="M302.6 43.6H313.2V53.5H302.6Z" stroke="#444"/>
 <path d="M302.6 43.6L306.6 38.4H317.8L313.2 43.6" stroke="#444"/>
 <path d="M313.2 43.6H302.6" stroke="#333" stroke-width="1.1"/>
 <path d="M317.8 38.4V46" stroke="#444"/>
 <circle cx="317.8" cy="49.6" r="4" fill="#fcfcfc" stroke="#555" stroke-width="0.75"/>
 <path d="M317.8 47.3V51.9M315.5 49.6H320.1" stroke="#444" stroke-width="0.8"/>
 <!-- grid + -->
 <path d="M325.6 38.9H339.8V53.5H325.6Z" stroke="#444" stroke-width="0.75"/>
 <path d="M328.4 38.9V53.5M331.3 38.9V53.5M334.2 38.9V53.5M337 38.9V53.5M325.6 41.8H339.8M325.6 44.7H339.8M325.6 47.6H339.8M325.6 50.5H339.8" stroke="#555" stroke-width="0.5"/>
 <circle cx="338.2" cy="50.6" r="3.7" fill="#fcfcfc" stroke="#555" stroke-width="0.75"/>
 <path d="M338.2 48.4V52.8M336 50.6H340.4" stroke="#444" stroke-width="0.8"/>
 <!-- arrange -->
 <path d="M355.5 39.6L364.2 41.3L362.6 50.2L353.8 48.4Z"/>
 <path d="M348.6 46.4L351.8 44.2M347.8 42.4L350.5 41.6M348.2 50.8L350.8 49" stroke-width="0.7"/>
 <path d="M348.6 53.3H363.6" stroke-width="1.4" stroke="#888"/>
 <!-- layout -->
 <path d="M369.3 39H385V54.5H369.3Z" stroke="#777" stroke-width="1"/>
 <rect x="370.6" y="42.2" width="13.2" height="2.2" fill="#bbb" stroke="none"/>
 <rect x="370.6" y="45.6" width="13.2" height="1.6" fill="#999" stroke="none"/>
 <rect x="370.6" y="47.8" width="3.6" height="5.2" fill="#aaa" stroke="none"/>
 <rect x="375.2" y="48.4" width="8.6" height="1.6" fill="#999" stroke="none"/>
 <rect x="375.2" y="51" width="8.6" height="1.6" fill="#999" stroke="none"/>
 <!-- pages 0 -->
 <path d="M394.9 52.6V38.2H404.2L406.2 40.4V41.2"/>
 <path d="M397.6 41.2H407.5L409.8 43.6V55H397.6Z" fill="#fcfcfc"/>
 <ellipse cx="403.6" cy="48.4" rx="2.3" ry="3.4"/>
 <!-- pages P -->
 <path d="M416.6 52.6V38.2H425.9L427.9 40.4V41.2"/>
 <path d="M419.2 41.2H428.9L431 43.6V55H419.2Z" fill="#fcfcfc"/>
 <path d="M423.6 51.8V45H426.2Q428.2 45 428.2 46.9Q428.2 48.8 426.2 48.8H423.6"/>
 <!-- layers -->
 <g stroke="none" fill="#8a8a8a">
  <rect x="439" y="40.4" width="14" height="2.6"/>
  <rect x="439" y="43.8" width="14" height="2.6"/>
  <rect x="439" y="47.3" width="14" height="2.6"/>
  <rect x="439" y="50.8" width="14" height="2.6"/>
 </g>
 <!-- separators -->
 <path d="M464 40V55.6M676.2 40.3V54.5" stroke="#c8c8c8" stroke-width="1"/>
 <!-- move -->
 <path d="M481.8 38.6L484.2 41.2H482.8V42.6H480.8V41.2H479.4Z" stroke-width="0.8"/>
 <path d="M481.8 55.1L484.2 52.5H482.8V51.1H480.8V52.5H479.4Z" stroke-width="0.8"/>
 <path d="M473.4 46.8L476 44.4V45.8H477.4V47.8H476V49.2Z" stroke-width="0.8"/>
 <path d="M490.2 46.8L487.6 44.4V45.8H486.2V47.8H487.6V49.2Z" stroke-width="0.8"/>
 <circle cx="481.8" cy="46.8" r="0.9" fill="#777" stroke="none"/>
 <circle cx="479.2" cy="46.8" r="0.5" fill="#777" stroke="none"/>
 <circle cx="484.4" cy="46.8" r="0.5" fill="#777" stroke="none"/>
 <!-- rotate -->
 <path d="M498 48.4A7 7 0 0 1 508.6 40.8"/>
 <path d="M507.2 40.2L511.6 44.8H507.2Z" fill="#fcfcfc"/>
 <path d="M503.9 43.2L509.8 49.2L503.9 55.2L498 49.2Z"/>
 <!-- scale -->
 <path d="M517.2 45.9H527V54.8H517.2Z"/>
 <path d="M517.2 38.5H533.8V54.8H527" stroke-dasharray="1 1.2"/>
 <path d="M527.4 45.4L532 40.8M529.4 40.8H532V43.4"/>
 <!-- lay on face -->
 <path d="M545 39.4L556.2 41.6L554.2 51.4L543 49.4Z"/>
 <path d="M539.4 47.4L542.2 45.4L541.4 49.6Z" stroke-width="0.7"/>
 <path d="M540 53.9H556" stroke-width="1.4" stroke="#888"/>
 <!-- split -->
 <path d="M562.4 39H576.4V45.4H562.4Z M562.4 46.8H576.4V54.4H562.4Z"/>
 <!-- faint -->
 <g stroke="#d6d6d6" stroke-width="0.7">
  <path d="M583.2 42.4H594.8V54.8H583.2Z"/>
  <path d="M587.6 38.9H600.4V50.2H587.6Z"/>
 </g>
 <!-- cut support -->
 <path d="M607 38.9H621.4V54.8H613.8V45.5H607Z"/>
 <rect x="607.3" y="45.5" width="6.5" height="9.3" fill="#8e8e8e" stroke="#555"/>
 <!-- cube -->
 <path d="M628.4 42.4H638.8V54.4H628.4Z"/>
 <path d="M628.4 42.4L632.6 38.8H643.6L638.8 42.4M643.6 38.8V50.6L638.8 54.4"/>
 <path d="M632 44L634 54" stroke="#aaa" stroke-width="0.5"/>
 <!-- T -->
 <path d="M650.4 38.8H662.6V41.8H658.2V54.3H654.8V41.8H650.4Z" stroke="#666"/>
 <rect x="660.4" y="48.8" width="5.8" height="5.6" fill="#fcfcfc" stroke="none"/>
 <path d="M661 50H665.2V54.2H661.4V52.2H665" stroke-width="0.9"/>
 <!-- puzzle -->
 <path d="M686 41H692.2Q690.8 43.4 692.6 44.2L695 45.6V55.3H686Z"/>
 <path d="M686 48.2H689.2Q690 50.2 691.8 49M690.6 55.3V51.6"/>
 <path d="M692.6 41.4L695.8 38.6H699.2L702.6 42.6L699.2 46.6H695.8"/>
</g>
</svg>
</body></html>
